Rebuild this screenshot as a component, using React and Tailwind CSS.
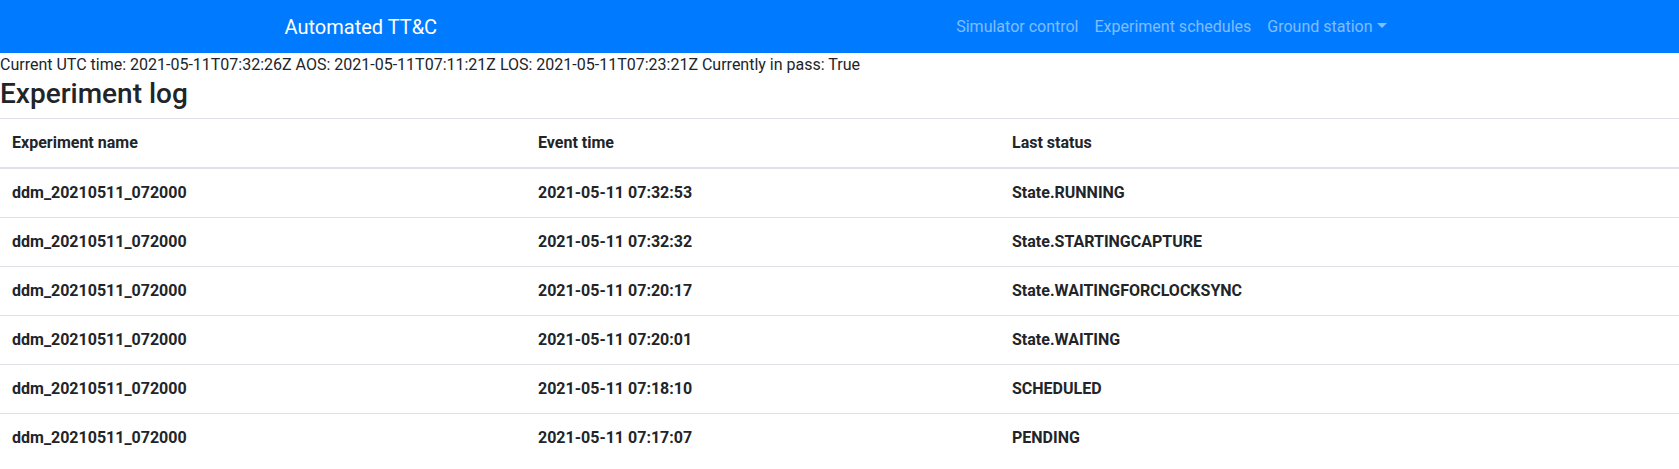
const rows = [
  ["ddm_20210511_072000", "2021-05-11 07:32:53", "State.RUNNING"],
  ["ddm_20210511_072000", "2021-05-11 07:32:32", "State.STARTINGCAPTURE"],
  ["ddm_20210511_072000", "2021-05-11 07:20:17", "State.WAITINGFORCLOCKSYNC"],
  ["ddm_20210511_072000", "2021-05-11 07:20:01", "State.WAITING"],
  ["ddm_20210511_072000", "2021-05-11 07:18:10", "SCHEDULED"],
  ["ddm_20210511_072000", "2021-05-11 07:17:07", "PENDING"],
];

export default function App() {
  return (
    <div className="min-h-screen bg-white text-[#212529] font-['Roboto','Liberation_Sans',sans-serif] text-base leading-6">
      {/* NAVBAR */}
      <nav className="bg-[#007bff] h-[53px] flex items-center">
        <div className="w-full max-w-[1140px] mx-auto px-[15px] flex items-center justify-between">
          <a href="#" className="text-white text-xl leading-[30px]">
            Automated TT&amp;C
          </a>
          <ul className="flex items-center">
            <li>
              <a href="#" className="block px-2 text-white/50">Simulator control</a>
            </li>
            <li>
              <a href="#" className="block px-2 text-white/50">Experiment schedules</a>
            </li>
            <li>
              <a href="#" className="flex items-center px-2 text-white/50">
                Ground station
                <span className="inline-block w-0 h-0 ml-[4px] mb-[2px] border-t-[5px] border-x-[5px] border-x-transparent border-t-white/50" />
              </a>
            </li>
          </ul>
        </div>
      </nav>

      {/* INFOS */}
      <div className="leading-6">
        Current UTC time: 2021-05-11T07:32:26Z AOS: 2021-05-11T07:11:21Z LOS: 2021-05-11T07:23:21Z Currently in pass: True
      </div>
      <h3 className="text-[28px] leading-[1.2] font-medium mb-[7px]">Experiment log</h3>

      {/* TABLE */}
      <table className="w-full border-collapse text-left">
        <thead>
          <tr>
            <th className="w-[526px] p-3 font-bold border-t border-b-2 border-[#dee2e6]">Experiment name</th>
            <th className="w-[474px] p-3 font-bold border-t border-b-2 border-[#dee2e6]">Event time</th>
            <th className="p-3 font-bold border-t border-b-2 border-[#dee2e6]">Last status</th>
          </tr>
        </thead>
        <tbody>
          {rows.map((r, i) => (
            <tr key={i}>
              <td className="p-3 font-bold border-t border-[#dee2e6]">{r[0]}</td>
              <td className="p-3 font-bold border-t border-[#dee2e6]">{r[1]}</td>
              <td className="p-3 font-bold border-t border-[#dee2e6]">{r[2]}</td>
            </tr>
          ))}
        </tbody>
      </table>
    </div>
  );
}
